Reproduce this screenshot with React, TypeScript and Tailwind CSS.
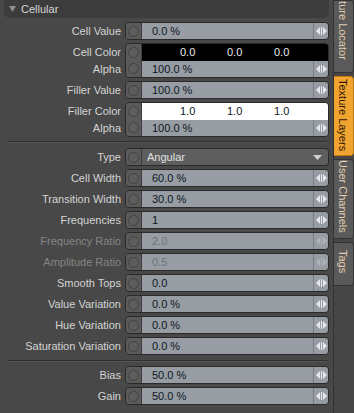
import React from "react";

const Arrows = ({ dim }: { dim?: boolean }) => (
  <svg width="11" height="10" viewBox="0 0 11 10">
    <g fill={dim ? "#aeb3b8" : "#e6e9ec"}>
      <path d="M0 5 L4 1 L4 9 Z" />
      <rect x="5" y="1" width="1" height="8" />
      <path d="M11 5 L7 1 L7 9 Z" />
    </g>
  </svg>
);

const Circle = () => (
  <div className="flex w-[15px] shrink-0 items-center justify-center bg-[#5a5a5a]">
    <div className="h-[11px] w-[11px] rounded-full border border-[#434343] bg-[#5d5d5d]" />
  </div>
);

const Label = ({ text, dim, h = "h-[18px]" }: { text: string; dim?: boolean; h?: string }) => (
  <div className={`flex ${h} w-[121px] shrink-0 items-center justify-end ${dim ? "text-[#858585]" : "text-[#d4d4d4]"}`}>
    {text}
  </div>
);

const FieldInner = ({ value, dim, arrows = true }: { value: string; dim?: boolean; arrows?: boolean }) => (
  <>
    <div className={`flex flex-1 items-center border-l border-[#3c3c3c] bg-[#979da3] pl-[10px] ${dim ? "text-[#6e747b]" : "text-[#0e1626]"}`}>
      {value}
    </div>
    {arrows && (
      <div className="flex w-[15px] shrink-0 items-center justify-center border-l border-[#777d84] bg-[#979da3]">
        <Arrows dim={dim} />
      </div>
    )}
  </>
);

const Row = ({ label, value, dim }: { label: string; value: string; dim?: boolean }) => (
  <div className="flex items-center gap-[4px]">
    <Label text={label} dim={dim} />
    <div className="flex h-[18px] flex-1 overflow-hidden rounded-[4px] border border-[#2a2a2a]">
      <Circle />
      <FieldInner value={value} dim={dim} />
    </div>
  </div>
);

const ColorGroup = ({ label, light, vals }: { label: string; light?: boolean; vals: string[] }) => (
  <div className="flex gap-[4px]">
    <div className="flex flex-col">
      <Label text={label} h="h-[18px]" />
      <Label text="Alpha" h="h-[17px]" />
    </div>
    <div className="flex h-[35px] flex-1 flex-col overflow-hidden rounded-[4px] border border-[#2a2a2a]">
      <div className="flex h-[17px]">
        <Circle />
        <div className={`flex flex-1 items-center border-l border-[#3c3c3c] pl-[38px] ${light ? "bg-white text-[#0e1626]" : "bg-black text-[#e8e8e8]"}`}>
          {vals.map((v, i) => (
            <span key={i} className="w-[47px]">{v}</span>
          ))}
        </div>
      </div>
      <div className="flex flex-1">
        <Circle />
        <FieldInner value="100.0 %" />
      </div>
    </div>
  </div>
);

const Separator = ({ cls }: { cls: string }) => (
  <div className={`ml-[8px] h-[2px] border-t border-[#2f2f2f] border-b border-b-[#555555] ${cls}`} />
);

const Tab = ({ text, active, cls }: { text: string; active?: boolean; cls: string }) => (
  <div
    className={`flex shrink-0 flex-col items-start justify-end overflow-hidden rounded-r-[4px] border border-l-0 pl-[1px] ${
      active ? "border-[#c07a10] bg-[#f2a431] text-[#2a1800]" : "border-[#333333] bg-[#5a5a5a] text-[#e2cdb0]"
    } ${cls}`}
  >
    <span className="[writing-mode:vertical-rl] whitespace-nowrap leading-[16px]">{text}</span>
  </div>
);

export default function App() {
  return (
    <div className="flex h-[413px] w-[354px] overflow-hidden bg-[#484848] text-[11px] [font-family:'Liberation_Sans',Arial,sans-serif]">
      <div className="flex w-[333px] flex-col pr-[4px]">
        <div className="ml-[4px] flex h-[18px] items-center rounded-b-[6px] bg-[#3c3c3c] text-[#d6d6d6]">
          <svg className="ml-[5px] mr-[5px]" width="7" height="6" viewBox="0 0 7 6">
            <path d="M0 0 L7 0 L3.5 6 Z" fill="#8f8f8f" />
          </svg>
          <span>Cellular</span>
        </div>
        <div className="mt-[4px] flex flex-col gap-[3px]">
          <Row label="Cell Value" value="0.0 %" />
          <ColorGroup label="Cell Color" vals={["0.0", "0.0", "0.0"]} />
          <Row label="Filler Value" value="100.0 %" />
          <ColorGroup label="Filler Color" light vals={["1.0", "1.0", "1.0"]} />
        </div>
        <Separator cls="mt-[4px] mb-[5px]" />
        <div className="flex flex-col gap-[3px]">
          <div className="flex items-center gap-[4px]">
            <Label text="Type" />
            <div className="flex h-[18px] flex-1 overflow-hidden rounded-[4px] border border-[#2a2a2a]">
              <Circle />
              <div className="flex flex-1 items-center justify-between border-l border-[#3c3c3c] bg-[#5e5e5e] pl-[5px] pr-[6px] text-[#e2e2e2]">
                <span>Angular</span>
                <svg width="9" height="5" viewBox="0 0 9 5">
                  <path d="M0 0 L9 0 L4.5 5 Z" fill="#d0d0d0" />
                </svg>
              </div>
            </div>
          </div>
          <Row label="Cell Width" value="60.0 %" />
          <Row label="Transition Width" value="30.0 %" />
          <Row label="Frequencies" value="1" />
          <Row label="Frequency Ratio" value="2.0" dim />
          <Row label="Amplitude Ratio" value="0.5" dim />
          <Row label="Smooth Tops" value="0.0" />
          <Row label="Value Variation" value="0.0 %" />
          <Row label="Hue Variation" value="0.0 %" />
          <Row label="Saturation Variation" value="0.0 %" />
        </div>
        <Separator cls="mt-[5px] mb-[4px]" />
        <div className="flex flex-col gap-[3px]">
          <Row label="Bias" value="50.0 %" />
          <Row label="Gain" value="50.0 %" />
        </div>
      </div>
      <div className="flex w-[21px] flex-col gap-[3px] border-l border-[#333333] bg-[#464646]">
        <Tab text="Texture Locator" cls="h-[73px] pb-[12px]" />
        <Tab text="Texture Layers" active cls="h-[80px] pb-[4px]" />
        <Tab text="User Channels" cls="h-[80px] pb-[5px]" />
        <Tab text="Tags" cls="h-[44px] pb-[12px]" />
      </div>
    </div>
  );
}
